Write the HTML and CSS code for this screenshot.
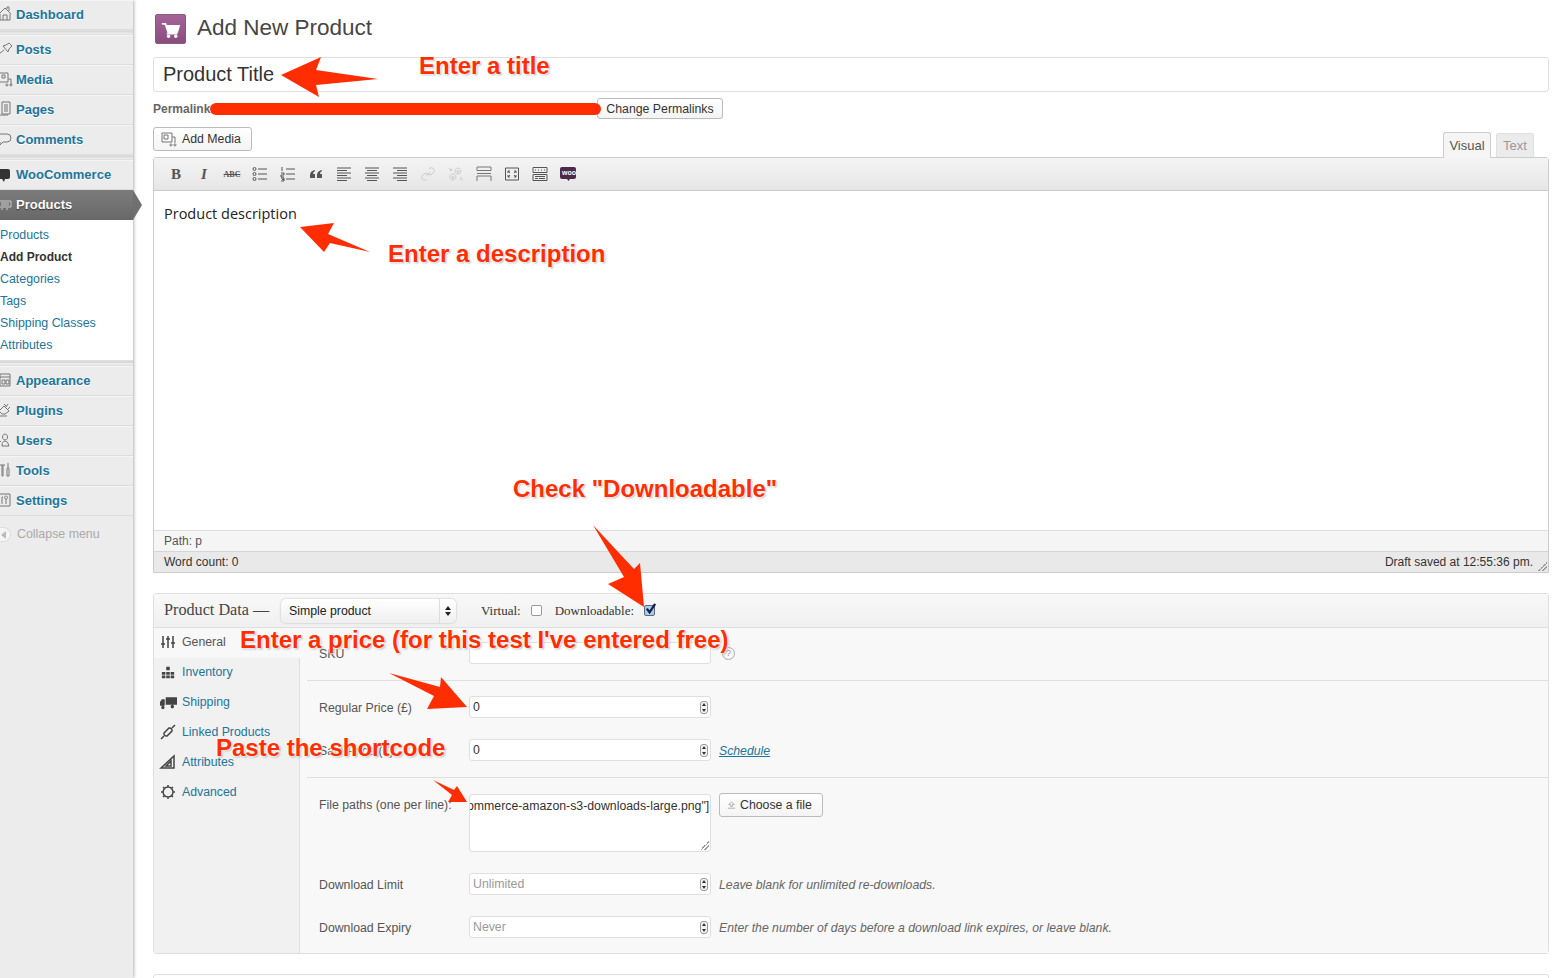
FILE: index.html
```html
<!DOCTYPE html>
<html lang="en">
<head>
    <meta charset="UTF-8">
    <title>Add New Product</title>
    <link rel="stylesheet" href="styles.css">
</head>
<body>
<div id="page">
    <div id="sidebar">
        <ul class="menu">
            <li class="item"><svg class="ico" viewBox="0 0 14 16"><path d="M-1 8L5 2l6 6M0 8v6h10V8M3 14V9h4v5M7 3V1h2v4"/></svg><a>Dashboard</a></li>
            <li class="sep"></li>
            <li class="item"><svg class="ico" viewBox="0 0 14 16"><path d="M-1 13l5-4M3 5l5 6 1-3 3-3-3-3-3 2z"/></svg><a>Posts</a></li>
            <li class="item"><svg class="ico" viewBox="0 0 14 16"><path d="M-1 2h9v9h-9zM2 4h3v3H2zM8 8h3v5M6 14a1 1 0 1 0 0-.1M10 14a1 1 0 1 0 0-.1"/></svg><a>Media</a></li>
            <li class="item"><svg class="ico" viewBox="0 0 14 16"><path d="M2 1h8v12H2zM4 4h4M4 6h4M4 8h4M4 10h4M-1 14h9"/></svg><a>Pages</a></li>
            <li class="item"><svg class="ico" viewBox="0 0 14 16"><path d="M-1 3h8q4 0 4 4t-4 4H3l-3 3V11"/></svg><a>Comments</a></li>
            <li class="sep"></li>
            <li class="item"><svg class="ico solid" viewBox="0 0 14 16"><rect x="-2" y="3" width="12" height="10" rx="2"/><path d="M2 13h3l-1 3z"/></svg><a>WooCommerce</a></li>
            <li class="item active"><svg class="ico" viewBox="0 0 14 16"><path d="M-1 5h12v6H-1zM1 7h8M1 9h8M1 13h2M6 13h2"/></svg><a>Products</a></li>
            <li class="sub">
                <a>Products</a>
                <a class="cur">Add Product</a>
                <a>Categories</a>
                <a>Tags</a>
                <a>Shipping Classes</a>
                <a>Attributes</a>
            </li>
            <li class="sep wide"></li>
            <li class="item"><svg class="ico" viewBox="0 0 14 16"><path d="M0 2h10v12H0zM0 5h10M2 8h3v4H2zM6 8h3v4H6z"/></svg><a>Appearance</a></li>
            <li class="item"><svg class="ico" viewBox="0 0 14 16"><path d="M-1 9l5-5 5 5-4 3H2zM4 2l2 2M8 2L6 5M10 5L8 7M-1 14h8"/></svg><a>Plugins</a></li>
            <li class="item"><svg class="ico" viewBox="0 0 14 16"><path d="M5 2a2.500 3 0 1 0 .1 0M2 14q0-5 3-5t4 5zM1 9q-2 1-2 4"/></svg><a>Users</a></li>
            <li class="item"><svg class="ico" viewBox="0 0 14 16"><path d="M0 3h5M2 3v11h1V3M8 1v5M8 6a1.500 1.500 0 0 1 1 2v6H7V8a1.500 1.500 0 0 1 1-2"/></svg><a>Tools</a></li>
            <li class="item"><svg class="ico" viewBox="0 0 14 16"><path d="M-1 2h11v12H-1zM2 5v7M2 5h1M6 4a1.500 1.500 0 1 0 .1 0M6 7v5"/></svg><a>Settings</a></li>
            <li class="collapse"><span class="arrow-btn"></span>Collapse menu</li>
        </ul>
    </div>

    <div id="main">
        <div class="head">
            <div class="head-icon">
                <svg viewBox="0 0 30 30"><path class="cart" d="M6 9h4l.6 2H24l-2 7H12.500L10 10.500M11 19.500h11"/><circle class="wheel" cx="13" cy="22" r="1.800"/><circle class="wheel" cx="20.500" cy="22" r="1.800"/></svg>
            </div>
            <h2>Add New Product</h2>
        </div>

        <div class="title-box">Product Title</div>

        <div class="perma">
            <strong>Permalink:</strong>
            <button class="btn change">Change Permalinks</button>
        </div>

        <div class="media-row">
            <button class="btn add-media">
                <svg viewBox="0 0 16 16"><path d="M1 2h10v9H1zM3 4h4v4H3zM11 6h3v6M9 14a1 1 0 1 0 0-.1M13 14a1 1 0 1 0 0-.1"/></svg>
                Add Media
            </button>
            <div class="tabs">
                <span class="tab on">Visual</span>
                <span class="tab">Text</span>
            </div>
        </div>

        <div class="editor">
            <div class="toolbar">
                <span class="tb b">B</span>
                <span class="tb i">I</span>
                <span class="tb abc">ABC</span>
                <span class="tb"><svg viewBox="0 0 16 16"><path d="M6 3h9M6 8h9M6 13h9"/><circle cx="2.500" cy="3" r="1.500"/><circle cx="2.500" cy="8" r="1.500"/><circle cx="2.500" cy="13" r="1.500"/></svg></span>
                <span class="tb"><svg viewBox="0 0 16 16"><path d="M6 3h9M6 8h9M6 13h9M2 1v4M1 7h3v2H1v2h3M1 12h3v3H1M2 13.500h2"/></svg></span>
                <span class="tb"><svg class="fill" viewBox="0 0 16 16"><path d="M7 4Q2 5 2 9v3h5V8H5q0-2 2-3zM14 4q-5 1-5 5v3h5V8h-2q0-2 2-3z"/></svg></span>
                <span class="tb"><svg viewBox="0 0 16 16"><path d="M1 2h14M1 4.500h10M1 7h14M1 9.500h10M1 12h14M1 14.500h10"/></svg></span>
                <span class="tb"><svg viewBox="0 0 16 16"><path d="M1 2h14M3 4.500h10M1 7h14M3 9.500h10M1 12h14M3 14.500h10"/></svg></span>
                <span class="tb"><svg viewBox="0 0 16 16"><path d="M1 2h14M5 4.500h10M1 7h14M5 9.500h10M1 12h14M5 14.500h10"/></svg></span>
                <span class="tb off"><svg viewBox="0 0 16 16"><path d="M6 10l4-4M9 3l1-1a3 3 0 0 1 4 4l-2 2a3 3 0 0 1-4 0M7 13l-1 1a3 3 0 0 1-4-4l2-2a3 3 0 0 1 4 0"/></svg></span>
                <span class="tb off"><svg viewBox="0 0 16 16"><path d="M10 2a3 3 0 1 1-.1 0M10 4.500a1 1 0 1 1-.1 0M5 8a3 3 0 1 1-.1 0M5 10.500a1 1 0 1 1-.1 0M1 2l3 3M12 11l3 3M12 14l2-2M2 5l2-2"/></svg></span>
                <span class="tb more"><svg viewBox="0 0 16 16"><path d="M1 1h14M1 4.500h14M1 1v3.500M15 1v3.500M1 7.500h14M1 10h14M1 10v5M15 10v5"/></svg></span>
                <span class="tb"><svg viewBox="0 0 16 16"><path d="M1.500 2h13v12h-13zM4 5l2 2M4 5h2M4 5v2M12 5l-2 2M12 5h-2M12 5v2M4 11l2-2M4 11h2M4 11V9M12 11l-2-2M12 11h-2M12 11V9"/></svg></span>
                <span class="tb"><svg viewBox="0 0 16 16"><path d="M1 1.500h14v5H1zM3 4h1M6 4h1M9 4h1M12 4h1M1 8.500h14v6H1zM3 10.500h10M3 12.500h3M7 12.500h6"/></svg></span>
                <span class="tb"><svg class="woo" viewBox="0 0 16 16"><rect y="1" width="16" height="12" rx="2"/><path d="M7 13h3l-1.500 2z"/></svg><em class="woo-text">woo</em></span>
            </div>
            <div class="content">Product description</div>
            <div class="path">Path: p</div>
            <div class="count"><span>Word count: 0</span><span>Draft saved at 12:55:36 pm.</span><i class="grip"></i></div>
        </div>

        <div class="panel">
            <div class="panel-head">
                <span class="pd">Product Data —</span>
                <div class="select">Simple product<span class="sel-arrows"></span></div>
                <span class="opt">Virtual:</span>
                <span class="check"></span>
                <span class="opt">Downloadable:</span>
                <span class="check on"><svg viewBox="0 0 14 14"><path d="M3 6l3 4 6-9"/></svg></span>
            </div>
            <div class="panel-body">
                <ul class="ptabs">
                    <li class="on"><svg viewBox="0 0 14 14"><path d="M2 1v12M7 1v12M12 1v12M0 9h4M5 4h4M10 8h4"/></svg>General</li>
                    <li><svg class="fill" viewBox="0 0 16 14"><path d="M6 1h4v4H6zM1 7h4v3H1zM6 7h4v3H6zM11 7h4v3h-4zM1 11h4v3H1zM6 11h4v3H6zM11 11h4v3h-4z"/></svg>Inventory</li>
                    <li><svg class="fill truck" viewBox="0 0 18 14"><path d="M6 2h12v8H6zM5 4H2L0 7v4h5zM3 11a1.800 1.800 0 1 0 .1 0M13 10a1.800 1.800 0 1 0 .1 0"/></svg>Shipping</li>
                    <li><svg viewBox="0 0 14 14"><path d="M3 8l5-5a2.500 2.500 0 0 1 3 3l-5 5a2.500 2.500 0 0 1-3-3zM0 14l3-3M11 3l3-3"/></svg>Linked Products</li>
                    <li><svg viewBox="0 0 14 14"><path d="M0 13L13 1v12zM5 11l5-5v5z"/></svg>Attributes</li>
                    <li><svg viewBox="0 0 14 14"><path class="gear" d="M7 2a5 5 0 1 0 .1 0M7 0v2M7 12v2M0 7h2M12 7h2M2 2l1.500 1.500M10.500 10.500L12 12M2 12l1.500-1.500M10.500 3.500L12 2"/></svg>Advanced</li>
                </ul>
                <div class="options">
                    <div class="group first">
                        <div class="row">
                            <label>SKU</label>
                            <div class="input"></div>
                            <span class="tip">?</span>
                        </div>
                    </div>
                    <div class="group mid">
                        <div class="row">
                            <label>Regular Price (£)</label>
                            <div class="input">0<span class="spin"></span></div>
                        </div>
                        <div class="row">
                            <label>Sale Price (£)</label>
                            <div class="input">0<span class="spin"></span></div>
                            <a class="note link">Schedule</a>
                        </div>
                    </div>
                    <div class="group last">
                        <div class="row top">
                            <label>File paths (one per line):</label>
                            <div class="input area"><span class="clip">ommerce-amazon-s3-downloads-large.png"]</span><i class="grip"></i></div>
                            <button class="btn choose"><svg viewBox="0 0 10 10"><path d="M2 4l3-3 3 3H6v2H4V4zM1 8h8"/></svg>Choose a file</button>
                        </div>
                        <div class="row">
                            <label>Download Limit</label>
                            <div class="input hint">Unlimited<span class="spin"></span></div>
                            <span class="note">Leave blank for unlimited re-downloads.</span>
                        </div>
                        <div class="row">
                            <label>Download Expiry</label>
                            <div class="input hint">Never<span class="spin"></span></div>
                            <span class="note">Enter the number of days before a download link expires, or leave blank.</span>
                        </div>
                    </div>
                </div>
            </div>
        </div>

        <div class="next-box"></div>
    </div>

    <!-- annotations drawn over the screenshot -->
    <svg id="arrows" viewBox="0 0 1556 978">
        <polygon points="281,75 321,57 316,70 378,79 316,85 319,97"/>
        <polygon points="300,227 334,223 328,234 370,252 330,243 324,252"/>
        <polygon points="593,525 634,569 640,563 644,607 608,584 624,577"/>
        <polygon points="389,673 440,687 441,677 467,707 427,709 434,696"/>
        <polygon points="433,780 454,790 457,786 467,802 448,802 452,795"/>
    </svg>
    <div id="scribble"></div>
    <span class="call c-title">Enter a title</span>
    <span class="call c-desc">Enter a description</span>
    <span class="call c-check">Check "Downloadable"</span>
    <span class="call c-price">Enter a price (for this test I've entered free)</span>
    <span class="call c-paste">Paste the shortcode</span>
</div>
</body>
</html>
```

FILE: styles.css
```css
* {
    margin: 0;
    padding: 0;
    box-sizing: border-box;
}

html, body {
    height: 100%;
    overflow: hidden;
    background: #fff;
}

body {
    font: 12.300px "Liberation Sans", Arial, sans-serif;
    color: #333;
}

li {
    list-style-type: none;
}

svg {
    display: block;
    fill: none;
    stroke: #777;
    stroke-width: 1;
    overflow: visible;
}

#page {
    position: relative;
    display: flex;
    width: 1556px;
    height: 978px;
    overflow: hidden;
}

/* sidebar */
#sidebar {
    width: 133px;
    flex: none;
    background: #ececec;
    box-shadow: 1px 0 3px rgba(0, 0, 0, 0.3);
    position: relative;
    z-index: 1;
}

.item {
    height: 30px;
    display: flex;
    align-items: center;
    padding-bottom: 2px;
    border-top: 1px solid #f5f5f5;
    border-bottom: 1px solid #dcdcdc;
    font-size: 13px;
    font-weight: bold;
    color: #21759b;
    text-shadow: 0 1px 0 #fff;
    position: relative;
}

.ico {
    width: 14px;
    height: 16px;
    margin: 0 2px 0 0;
    flex: none;
    stroke: #777;
}

.ico.solid {
    fill: #333;
    stroke: none;
}

.active {
    background: linear-gradient(#7c7c7c, #686868);
    color: #fff;
    border: 0;
    text-shadow: 0 1px 1px #333;
}

.active .ico {
    stroke: #ccc;
}

.active::after {
    content: "";
    position: absolute;
    left: 133px;
    top: 0;
    border-left: 9px solid #707070;
    border-top: 15px solid transparent;
    border-bottom: 15px solid transparent;
}

.sep {
    height: 5px;
    background: linear-gradient(#e2e2e2, #d4d4d4 40%, #f0f0f0 60%, #dcdcdc);
}

.sep.wide {
    height: 6px;
}

.sub {
    background: #fff;
    padding: 4px 0;
    font-size: 12.400px;
}

.sub a {
    display: block;
    height: 22px;
    line-height: 22px;
    color: #21759b;
}

.sub .cur {
    color: #333;
    font-weight: bold;
    font-size: 12px;
}

.collapse {
    display: flex;
    align-items: center;
    gap: 6px;
    height: 18px;
    margin-top: 9px;
    font-size: 12.400px;
    color: #aaa;
}

.arrow-btn {
    width: 11px;
    height: 15px;
    flex: none;
    position: relative;
    background: #f5f5f5;
    border: 1px solid #ddd;
    border-left: 0;
    border-radius: 0 8px 8px 0;
}

.arrow-btn::after {
    content: "";
    position: absolute;
    left: 1px;
    top: 3px;
    border-right: 5px solid #bbb;
    border-top: 4px solid transparent;
    border-bottom: 4px solid transparent;
}

/* main column */
#main {
    flex: 1;
    min-width: 0;
    padding: 14px 7px 0 20px;
}

.head {
    display: flex;
    align-items: center;
    height: 30px;
    margin-bottom: 13px;
}

.head-icon {
    width: 31px;
    height: 30px;
    margin: 0 11px 0 2px;
    background: linear-gradient(#a46497, #8a4c7d);
    border: 1px solid #8a5a80;
    border-radius: 2px;
}

.cart {
    stroke: #fff;
    stroke-width: 1.500;
    fill: #fff;
}

.wheel {
    fill: #fff;
    stroke: none;
}

h2 {
    font-size: 22.500px;
    font-weight: normal;
    color: #464646;
    padding-bottom: 2px;
}

.title-box {
    height: 35px;
    line-height: 33px;
    padding-left: 9px;
    border: 1px solid #dfdfdf;
    border-radius: 3px;
    font-size: 20px;
    color: #333;
}

.btn {
    height: 24px;
    padding: 0 10px;
    border: 1px solid #bbb;
    border-radius: 3px;
    background: linear-gradient(#fff, #f4f4f4);
    font: 12.300px "Liberation Sans", Arial, sans-serif;
    color: #333;
}

.perma {
    display: flex;
    justify-content: space-between;
    align-items: center;
    height: 21px;
    width: 570px;
    margin-top: 6px;
    color: #666;
}

.perma strong {
    font-size: 12px;
}

.change {
    height: 21px;
    width: 126px;
    padding: 0;
}

.media-row {
    display: flex;
    justify-content: space-between;
    height: 30px;
    margin-top: 8px;
}

.add-media {
    display: flex;
    align-items: center;
    gap: 5px;
    width: 99px;
    padding: 0 7px;
}

.add-media svg {
    width: 16px;
    height: 16px;
}

.tabs {
    display: flex;
    align-items: flex-end;
    gap: 5px;
    margin-right: 15px;
    position: relative;
    z-index: 1;
}

.tab {
    width: 38px;
    height: 24px;
    line-height: 24px;
    text-align: center;
    font-size: 13px;
    color: #999;
    background: #ebebeb;
    border: 1px solid #dfdfdf;
    border-bottom: 0;
    border-radius: 3px 3px 0 0;
}

.tab.on {
    width: 48px;
    height: 26px;
    line-height: 26px;
    margin-bottom: -1px;
    color: #555;
    background: #f5f5f5;
    border-color: #ccc;
}

.editor {
    height: 416px;
    border: 1px solid #ccc;
    border-radius: 3px 3px 0 0;
    display: flex;
    flex-direction: column;
}

.toolbar {
    display: flex;
    align-items: center;
    height: 33px;
    padding-left: 8px;
    background: linear-gradient(#f4f4f4, #e6e6e6);
    border-bottom: 1px solid #ccc;
    flex: none;
}

.tb {
    width: 28px;
    height: 16px;
    display: flex;
    align-items: center;
    justify-content: center;
    position: relative;
    font: bold 15px "Liberation Serif", serif;
    color: #555;
}

.tb svg {
    width: 16px;
    height: 16px;
    stroke: #555;
}

.tb .fill {
    fill: #555;
    stroke: none;
}

.tb.i {
    font-style: italic;
}

.tb.abc {
    font-size: 8px;
    text-decoration: line-through;
}

.tb.off svg {
    stroke: #ccc;
}

.tb.more svg {
    stroke: #777;
}

.tb .woo {
    fill: #4e2a48;
    stroke: none;
}

.woo-text {
    position: absolute;
    left: 8px;
    top: 2px;
    font: bold 7px/9px "Liberation Sans", sans-serif;
    color: #fff;
}

.content {
    flex: 1;
    padding: 13px 10px;
    font: 14.500px/20px "Open Sans", "Noto Sans", sans-serif;
    color: #222;
}

.path {
    height: 21px;
    line-height: 21px;
    padding-left: 10px;
    background: #f5f5f5;
    border-top: 1px solid #ddd;
    color: #555;
    font-size: 12px;
}

.count {
    display: flex;
    justify-content: space-between;
    height: 21px;
    line-height: 20px;
    padding: 0 15px 0 10px;
    background: #e9e9e9;
    border-top: 1px solid #d5d5d5;
    color: #333;
    font-size: 12px;
    position: relative;
}

.grip {
    position: absolute;
    right: 1px;
    bottom: 1px;
    width: 9px;
    height: 9px;
    background: linear-gradient(135deg, transparent 50%, #999 50%, #999 58%, transparent 58%, transparent 72%, #999 72%, #999 80%, transparent 80%);
}

/* product data box */
.panel {
    height: 361px;
    margin-top: 20px;
    border: 1px solid #dfdfdf;
    border-radius: 3px;
    display: flex;
    flex-direction: column;
}

.panel-head {
    display: flex;
    align-items: center;
    height: 34px;
    flex: none;
    padding-left: 10px;
    background: linear-gradient(#f8f8f8, #f0f0f0);
    border-bottom: 1px solid #dfdfdf;
    font-family: "Liberation Serif", serif;
}

.pd {
    width: 117px;
    font-size: 16.200px;
    color: #464646;
}

.select {
    width: 175px;
    height: 24px;
    padding-left: 8px;
    margin-right: 25px;
    position: relative;
    font: 12.300px/24px "Liberation Sans", sans-serif;
    color: #222;
    background: linear-gradient(#fff, #efefef);
    border-radius: 5px;
    box-shadow: 0 0 2px rgba(0, 0, 0, 0.3);
}

.sel-arrows {
    position: absolute;
    right: 0;
    top: 0;
    width: 17px;
    height: 24px;
    border-left: 1px solid #ddd;
}

.sel-arrows::before, .sel-arrows::after {
    content: "";
    position: absolute;
    left: 5px;
    border-left: 3px solid transparent;
    border-right: 3px solid transparent;
}

.sel-arrows::before {
    top: 7px;
    border-bottom: 4px solid #222;
}

.sel-arrows::after {
    top: 13px;
    border-top: 4px solid #222;
}

.opt {
    font-size: 13px;
    color: #333;
}

.check {
    width: 11px;
    height: 11px;
    margin: 0 13px 0 10px;
    position: relative;
    background: #fff;
    border: 1px solid #999;
    border-radius: 2px;
}

.check.on {
    background: #a9cdf2;
    border-color: #667;
}

.check svg {
    position: absolute;
    left: -1px;
    top: -3px;
    width: 13px;
    height: 13px;
    stroke: #14244d;
    stroke-width: 2.500;
}

.panel-body {
    flex: 1;
    display: flex;
    min-height: 0;
    background: #f8f8f8;
}

.ptabs {
    width: 146px;
    flex: none;
    background: #f1f1f1;
    border-right: 1px solid #dfdfdf;
}

.ptabs li {
    display: flex;
    align-items: center;
    gap: 7px;
    height: 30px;
    padding: 0 0 2px 7px;
    color: #21759b;
}

.ptabs li.on {
    background: #f8f8f8;
    color: #555;
    margin-right: -1px;
}

.ptabs svg {
    width: 14px;
    height: 14px;
    stroke: #444;
    stroke-width: 1.500;
    flex: none;
}

.ptabs svg.fill {
    fill: #444;
    stroke: none;
}

.ptabs svg.truck {
    width: 17px;
    margin-left: -1px;
    margin-right: -2px;
}

.options {
    flex: 1;
    min-width: 0;
    margin-left: 7px;
}

.group {
    display: flex;
    flex-direction: column;
    padding: 15px 0;
    gap: 21px;
    border-bottom: 1px solid #dfdfdf;
}

.group.first {
    height: 53px;
    padding-top: 14px;
}

.group.mid {
    height: 97px;
}

.group.last {
    border-bottom: 0;
    padding-top: 16px;
}

.row {
    display: flex;
    align-items: center;
}

.row.top {
    align-items: flex-start;
}

.row label {
    width: 162px;
    padding-left: 12px;
    padding-top: 1px;
    flex: none;
    color: #555;
}

.row.top label {
    padding-top: 4px;
}

.input {
    width: 242px;
    height: 22px;
    line-height: 21px;
    padding-left: 3px;
    flex: none;
    position: relative;
    background: #fff;
    border: 1px solid #dfdfdf;
    border-radius: 3px;
    color: #333;
}

.input.hint {
    color: #999;
}

.input.area {
    height: 58px;
    padding-left: 0;
}

.clip {
    display: block;
    height: 20px;
    line-height: 22px;
    overflow: hidden;
    white-space: nowrap;
    text-indent: -3px;
}

.spin {
    position: absolute;
    right: 2px;
    top: 4px;
    width: 8px;
    height: 13px;
    border: 1px solid #999;
    border-radius: 3px;
    background: #f2f2f2;
}

.spin::before, .spin::after {
    content: "";
    position: absolute;
    left: 1px;
    border-left: 2px solid transparent;
    border-right: 2px solid transparent;
}

.spin::before {
    top: 1px;
    border-bottom: 3px solid #333;
}

.spin::after {
    bottom: 1px;
    border-top: 3px solid #333;
}

.note {
    margin-left: 8px;
    padding-top: 1px;
    font-size: 12.250px;
    font-style: italic;
    color: #666;
}

.link {
    color: #21759b;
    text-decoration: underline;
}

.tip {
    width: 13px;
    height: 13px;
    line-height: 11px;
    margin-left: 11px;
    border: 1px solid #aaa;
    border-radius: 50%;
    text-align: center;
    font-size: 9px;
    color: #999;
}

.choose {
    display: flex;
    align-items: center;
    gap: 4px;
    width: 104px;
    margin: -1px 0 0 8px;
    padding: 0 7px;
}

.choose svg {
    width: 9px;
    height: 9px;
    stroke: #aaa;
}

.next-box {
    height: 40px;
    margin-top: 20px;
    border: 1px solid #dfdfdf;
    border-radius: 3px;
}

/* annotations */
#arrows {
    position: absolute;
    left: 0;
    top: 0;
    width: 1556px;
    height: 978px;
    z-index: 2;
    stroke: none;
    fill: #ff2d00;
}

#scribble {
    position: absolute;
    left: 210px;
    top: 103px;
    width: 391px;
    height: 12px;
    background: #ff2d00;
    border-radius: 6px;
    z-index: 2;
}

.call {
    position: absolute;
    z-index: 3;
    font-size: 24px;
    font-weight: bold;
    line-height: 28px;
    white-space: nowrap;
    color: #ff2d00;
    text-shadow: 0 0 2px #fff, 0 0 2px #fff, 0 0 3px #fff, 0 0 3px #fff, 1px 1px 2px rgba(0, 0, 0, 0.5);
}

.c-title { left: 419px; top: 52px; }
.c-desc { left: 388px; top: 240px; }
.c-check { left: 513px; top: 475px; }
.c-price { left: 240px; top: 626px; }
.c-paste { left: 216px; top: 734px; }
```
